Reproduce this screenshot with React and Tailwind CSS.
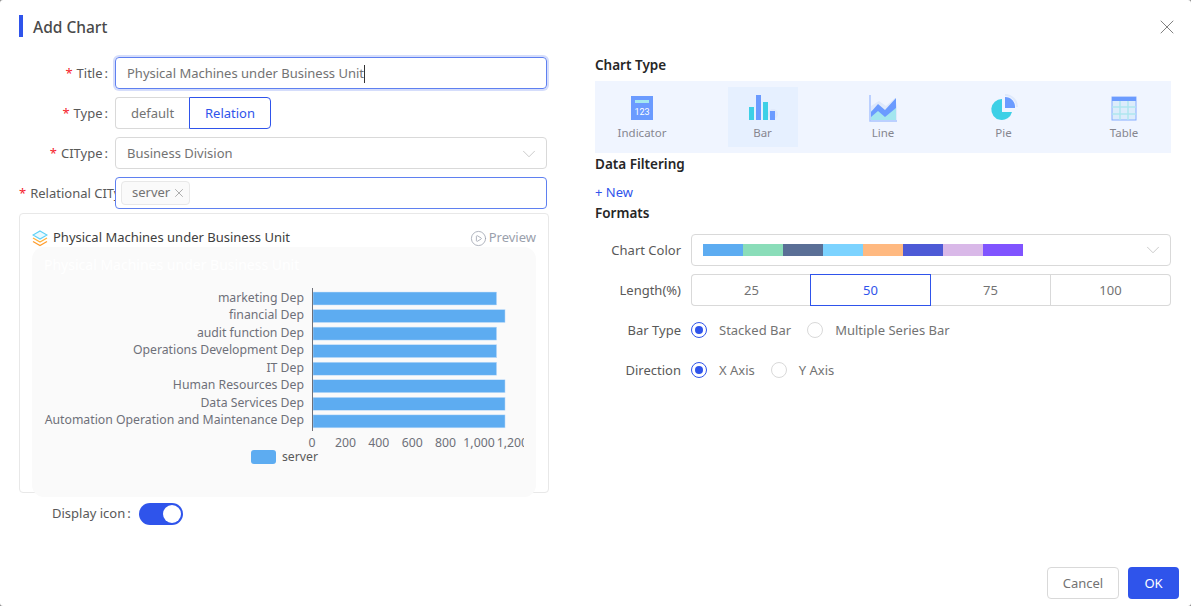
import { X, ChevronDown, CirclePlay } from 'lucide-react'

const labels = [
  'marketing Dep',
  'financial Dep',
  'audit function Dep',
  'Operations Development Dep',
  'IT Dep',
  'Human Resources Dep',
  'Data Services Dep',
  'Automation Operation and Maintenance Dep',
]
const values = [1100, 1150, 1100, 1100, 1100, 1150, 1150, 1150]
const ticks = ['0', '200', '400', '600', '800', '1,000', '1,200']
const palette = ['bg-[#5dacf1]', 'bg-[#8addb9]', 'bg-[#5a6f96]', 'bg-[#7cd3ff]', 'bg-[#ffb980]', 'bg-[#4d5ad6]', 'bg-[#d9b8e8]', 'bg-[#8054ff]']

const IndicatorIcon = () => (
  <svg width="30" height="28" viewBox="0 0 30 28">
    <rect x="4" y="2" width="22" height="24" fill="#6b9bff" />
    <rect x="8" y="6" width="14" height="3" fill="#a5e9f0" />
    <text x="15" y="20.5" textAnchor="middle" fontSize="9" fill="#fff" fontFamily="Roboto, sans-serif">123</text>
  </svg>
)

const BarIcon = () => (
  <svg width="30" height="28" viewBox="0 0 30 28">
    <circle cx="25" cy="20" r="5" fill="#dfe9fb" />
    <rect x="1" y="13" width="5" height="13" fill="#3dd0e6" />
    <rect x="8" y="1" width="5" height="25" fill="#6b9bff" />
    <rect x="15" y="8" width="5" height="18" fill="#3dd0e6" />
    <rect x="22" y="17" width="5" height="9" fill="#6b9bff" />
  </svg>
)

const LineIcon = () => (
  <svg width="30" height="28" viewBox="0 0 30 28">
    <path d="M3 26V12l8-5 7 5 9-8 2 8v14z" fill="#dfe9fb" />
    <path d="M3 26V17l8-3 6 6 11-6v12z" fill="#a3e6ef" />
    <path d="M3 18l7-8 7 6 11-12v10l-11 9-7-6-7 6z" fill="#6b9bff" />
    <path d="M2 1v26h27" fill="none" stroke="#a9c4ff" strokeWidth="1.5" />
  </svg>
)

const PieIcon = () => (
  <svg width="30" height="28" viewBox="0 0 30 28">
    <path d="M16 0a13 13 0 0 1 13 13h-2A11 11 0 0 0 16 2z" fill="#dfe9fb" />
    <path d="M13 5a10.5 10.5 0 1 0 10 13H13z" fill="#3dd0e6" />
    <path d="M16 3a10 10 0 0 1 10 11H16z" fill="#6b9bff" />
  </svg>
)

const TableIcon = () => (
  <svg width="30" height="28" viewBox="0 0 30 28">
    <rect x="3" y="3" width="24" height="23" fill="#dcecfb" stroke="#86aeff" />
    <rect x="3" y="3" width="24" height="4" fill="#6b9bff" />
    <path d="M11 7v19M19 7v19M3 13h24M3 20h24" stroke="#aee6f0" strokeWidth="1.5" />
  </svg>
)

const LayersIcon = () => (
  <svg width="16" height="17" viewBox="0 0 16 17" fill="none" className="shrink-0">
    <path d="M8 1l7 4-7 4-7-4z" stroke="#5fd0f5" strokeWidth="1.2" fill="#eafaff" />
    <path d="M1 8l7 4 7-4" stroke="#ffb03a" strokeWidth="1.3" />
    <path d="M1 11.5l7 4 7-4" stroke="#ff9d2e" strokeWidth="1.3" />
  </svg>
)

function FormRow({ label, children, clip }) {
  return (
    <div className="flex h-8">
      <div className={`w-[96px] shrink-0 pt-[2px] overflow-hidden whitespace-nowrap flex items-center text-[#595959] ${clip ? 'justify-start' : 'justify-end pr-[7px]'}`}>
        <span className="text-[#f5222d] mr-1">*</span>{label}
        {!clip && <span className="ml-[2px]">:</span>}
      </div>
      {children}
    </div>
  )
}

function Radio({ checked, label }) {
  return (
    <div className="flex items-center gap-3">
      {checked ? (
        <span className="w-4 h-4 rounded-full border border-[#2f54eb] flex items-center justify-center">
          <span className="w-2 h-2 rounded-full bg-[#2f54eb]" />
        </span>
      ) : (
        <span className="w-4 h-4 rounded-full border border-[#d9d9d9]" />
      )}
      <span className="text-[#737373] relative top-px">{label}</span>
    </div>
  )
}

function ChartTypeItem({ icon, label, active }) {
  return (
    <div className={`w-[70px] h-[60px] pt-[7px] flex flex-col items-center ${active ? 'bg-[#e6f0ff]' : ''}`}>
      {icon}
      <span className="text-[11.5px] leading-4 text-[#86868f] mt-[3px]">{label}</span>
    </div>
  )
}

function Chart() {
  return (
    <svg width="492" height="250" className="block" fontFamily="Noto Sans, sans-serif">
      <text x="12" y="23" fontSize="14" fill="#ffffff">Physical Machines under Business Unit</text>
      {labels.map((l, i) => (
        <g key={l}>
          <text x="272" y={50 + i * 17.55 + 4.5} textAnchor="end" fontSize="12.25" fill="#6e7079">{l}</text>
          <rect x="281" y={45 + i * 17.55} width={(values[i] / 200) * 33.4} height="13" fill="#5dacf1" stroke="#cfe4fa" strokeWidth="0.5" />
        </g>
      ))}
      <line x1="280.5" y1="41" x2="280.5" y2="184" stroke="#6e7079" />
      {ticks.map((t, i) => (
        <text key={t} x={280 + i * 33.4} y="199.5" textAnchor="middle" fontSize="12.25" fill="#6e7079">{t}</text>
      ))}
      <rect x="219" y="203" width="25" height="14" rx="3" fill="#5dacf1" />
      <text x="250" y="214" fontSize="12.25" fill="#595959">server</text>
    </svg>
  )
}

export default function App() {
  return (
    <div className="w-[1191px] h-[606px] bg-[#8c8c8c]">
      <div className="w-full h-full rounded-[3px] bg-white flex flex-col text-[13px] text-[#595959] font-['Noto_Sans',sans-serif]">
        {/* header */}
        <div className="flex items-center justify-between h-[22px] mt-[15px] pl-[19px] pr-[12px]">
          <div className="flex items-center gap-[10px]">
            <span className="w-1 h-[22px] bg-[#2f54eb]" />
            <span className="text-[15.5px] font-medium text-[#4a4a4a] relative top-[2px]">Add Chart</span>
          </div>
          <X size={24} strokeWidth={0.9} className="text-[#737373] relative top-px" />
        </div>

        <div className="flex pl-[19px] pr-[20px] mt-5 gap-[46px]">
          {/* left */}
          <div className="w-[530px] shrink-0">
            <div className="flex flex-col gap-2 w-[528px]">
              <FormRow label="Title">
                <div className="flex-1 flex items-center pt-px px-[11px] rounded-sm border border-[#5f80f0] shadow-[0_0_0_2px_rgba(47,84,235,0.2)] text-[#737373]">
                  Physical Machines under Business Unit<span className="w-px h-[18px] bg-[#333]" />
                </div>
              </FormRow>
              <FormRow label="Type">
                <div className="flex">
                  <div className="w-[74px] pt-px flex items-center justify-center border border-[#d9d9d9] border-r-0 rounded-l-sm text-[#737373]">default</div>
                  <div className="w-[82px] pt-px flex items-center justify-center border border-[#2f54eb] rounded-r-sm text-[#2f54eb]">Relation</div>
                </div>
              </FormRow>
              <FormRow label="CIType">
                <div className="flex-1 flex items-center justify-between pt-px pl-[11px] pr-[6px] rounded-sm border border-[#d9d9d9] text-[#737373]">
                  Business Division
                  <ChevronDown size={22} strokeWidth={0.8} className="text-[#b8b8b8]" />
                </div>
              </FormRow>
              <FormRow label="Relational CIType" clip>
                <div className="flex-1 flex items-center px-[5px] rounded-sm border border-[#5f80f0] bg-white">
                  <span className="h-6 flex items-center gap-[2px] pl-[10px] pr-[3px] bg-[#fafafa] border border-[#e8e8e8] rounded-sm text-[#737373]">
                    server <X size={14} strokeWidth={1.2} className="text-[#8c8c8c]" />
                  </span>
                </div>
              </FormRow>
            </div>

            {/* preview card */}
            <div className="h-[280px] mt-1 px-3 border border-[#e8e8e8] rounded-sm">
              <div className="h-[33px] flex items-center justify-between pt-[15px]">
                <div className="flex items-center gap-[5px] text-[#404040]">
                  <LayersIcon />
                  Physical Machines under Business Unit
                </div>
                <div className="flex items-center gap-[2px] text-[#9aa0ac]">
                  <CirclePlay size={17} strokeWidth={1.1} />
                  Preview
                </div>
              </div>
              <div className="h-[250px] bg-[#fafafa] rounded-xl">
                <Chart />
              </div>
            </div>

            <div className="flex items-center mt-[10px] pl-[33px]">
              <span className="w-[87px] text-[#595959]">Display icon<span className="ml-[2px]">:</span></span>
              <span className="w-11 h-[22px] rounded-full bg-[#2f54eb] flex items-center justify-end pr-[2px]">
                <span className="w-[18px] h-[18px] rounded-full bg-white" />
              </span>
            </div>
          </div>

          {/* right */}
          <div className="w-[576px] shrink-0">
            <div className="text-[13.5px] font-semibold text-[#262626] leading-[16px]">Chart Type</div>
            <div className="mt-[8px] h-[72px] bg-[#f0f5ff] px-3 flex items-center justify-between">
              <ChartTypeItem icon={<IndicatorIcon />} label="Indicator" />
              <ChartTypeItem icon={<BarIcon />} label="Bar" active />
              <ChartTypeItem icon={<LineIcon />} label="Line" />
              <ChartTypeItem icon={<PieIcon />} label="Pie" />
              <ChartTypeItem icon={<TableIcon />} label="Table" />
            </div>
            <div className="text-[13.5px] font-semibold text-[#262626] leading-[22px]">Data Filtering</div>
            <div className="mt-[6px] text-[#2f54eb] leading-[22px]">+ New</div>
            <div className="text-[13.5px] font-semibold text-[#262626] leading-[20px]">Formats</div>

            <div className="flex flex-col gap-2 mt-[11px]">
              <div className="flex h-8">
                <div className="w-[96px] shrink-0 pr-[10px] text-right leading-8">Chart Color</div>
                <div className="flex-1 flex items-center justify-between pl-[11px] pr-[6px] rounded-sm border border-[#d9d9d9]">
                  <div className="flex">
                    {palette.map(c => <span key={c} className={`w-10 h-3 ${c}`} />)}
                  </div>
                  <ChevronDown size={22} strokeWidth={0.8} className="text-[#b8b8b8]" />
                </div>
              </div>
              <div className="flex h-8">
                <div className="w-[96px] shrink-0 pr-[10px] text-right leading-8">Length(%)</div>
                <div className="flex-1 grid grid-cols-4 text-[#737373]">
                  <div className="flex items-center justify-center pt-px border border-[#d9d9d9] border-r-0 rounded-l-sm">25</div>
                  <div className="flex items-center justify-center pt-px -ml-px border border-[#2f54eb] text-[#2f54eb]">50</div>
                  <div className="flex items-center justify-center pt-px border border-[#d9d9d9] border-l-0">75</div>
                  <div className="flex items-center justify-center pt-px border border-[#d9d9d9] border-l-0 rounded-r-sm">100</div>
                </div>
              </div>
              <div className="flex h-8">
                <div className="w-[96px] shrink-0 pr-[10px] text-right leading-8">Bar Type</div>
                <div className="flex items-center gap-4">
                  <Radio checked label="Stacked Bar" />
                  <Radio label="Multiple Series Bar" />
                </div>
              </div>
              <div className="flex h-8">
                <div className="w-[96px] shrink-0 pr-[10px] text-right leading-8">Direction</div>
                <div className="flex items-center gap-4">
                  <Radio checked label="X Axis" />
                  <Radio label="Y Axis" />
                </div>
              </div>
            </div>
          </div>
        </div>

        {/* footer */}
        <div className="mt-auto flex justify-end gap-[9px] pr-[12px] pb-[7px]">
          <button className="w-[72px] h-8 pt-px border border-[#d9d9d9] rounded-sm text-[#737373]">Cancel</button>
          <button className="w-[51px] h-8 pt-px bg-[#2f54eb] rounded-sm text-white">OK</button>
        </div>
      </div>
    </div>
  )
}
